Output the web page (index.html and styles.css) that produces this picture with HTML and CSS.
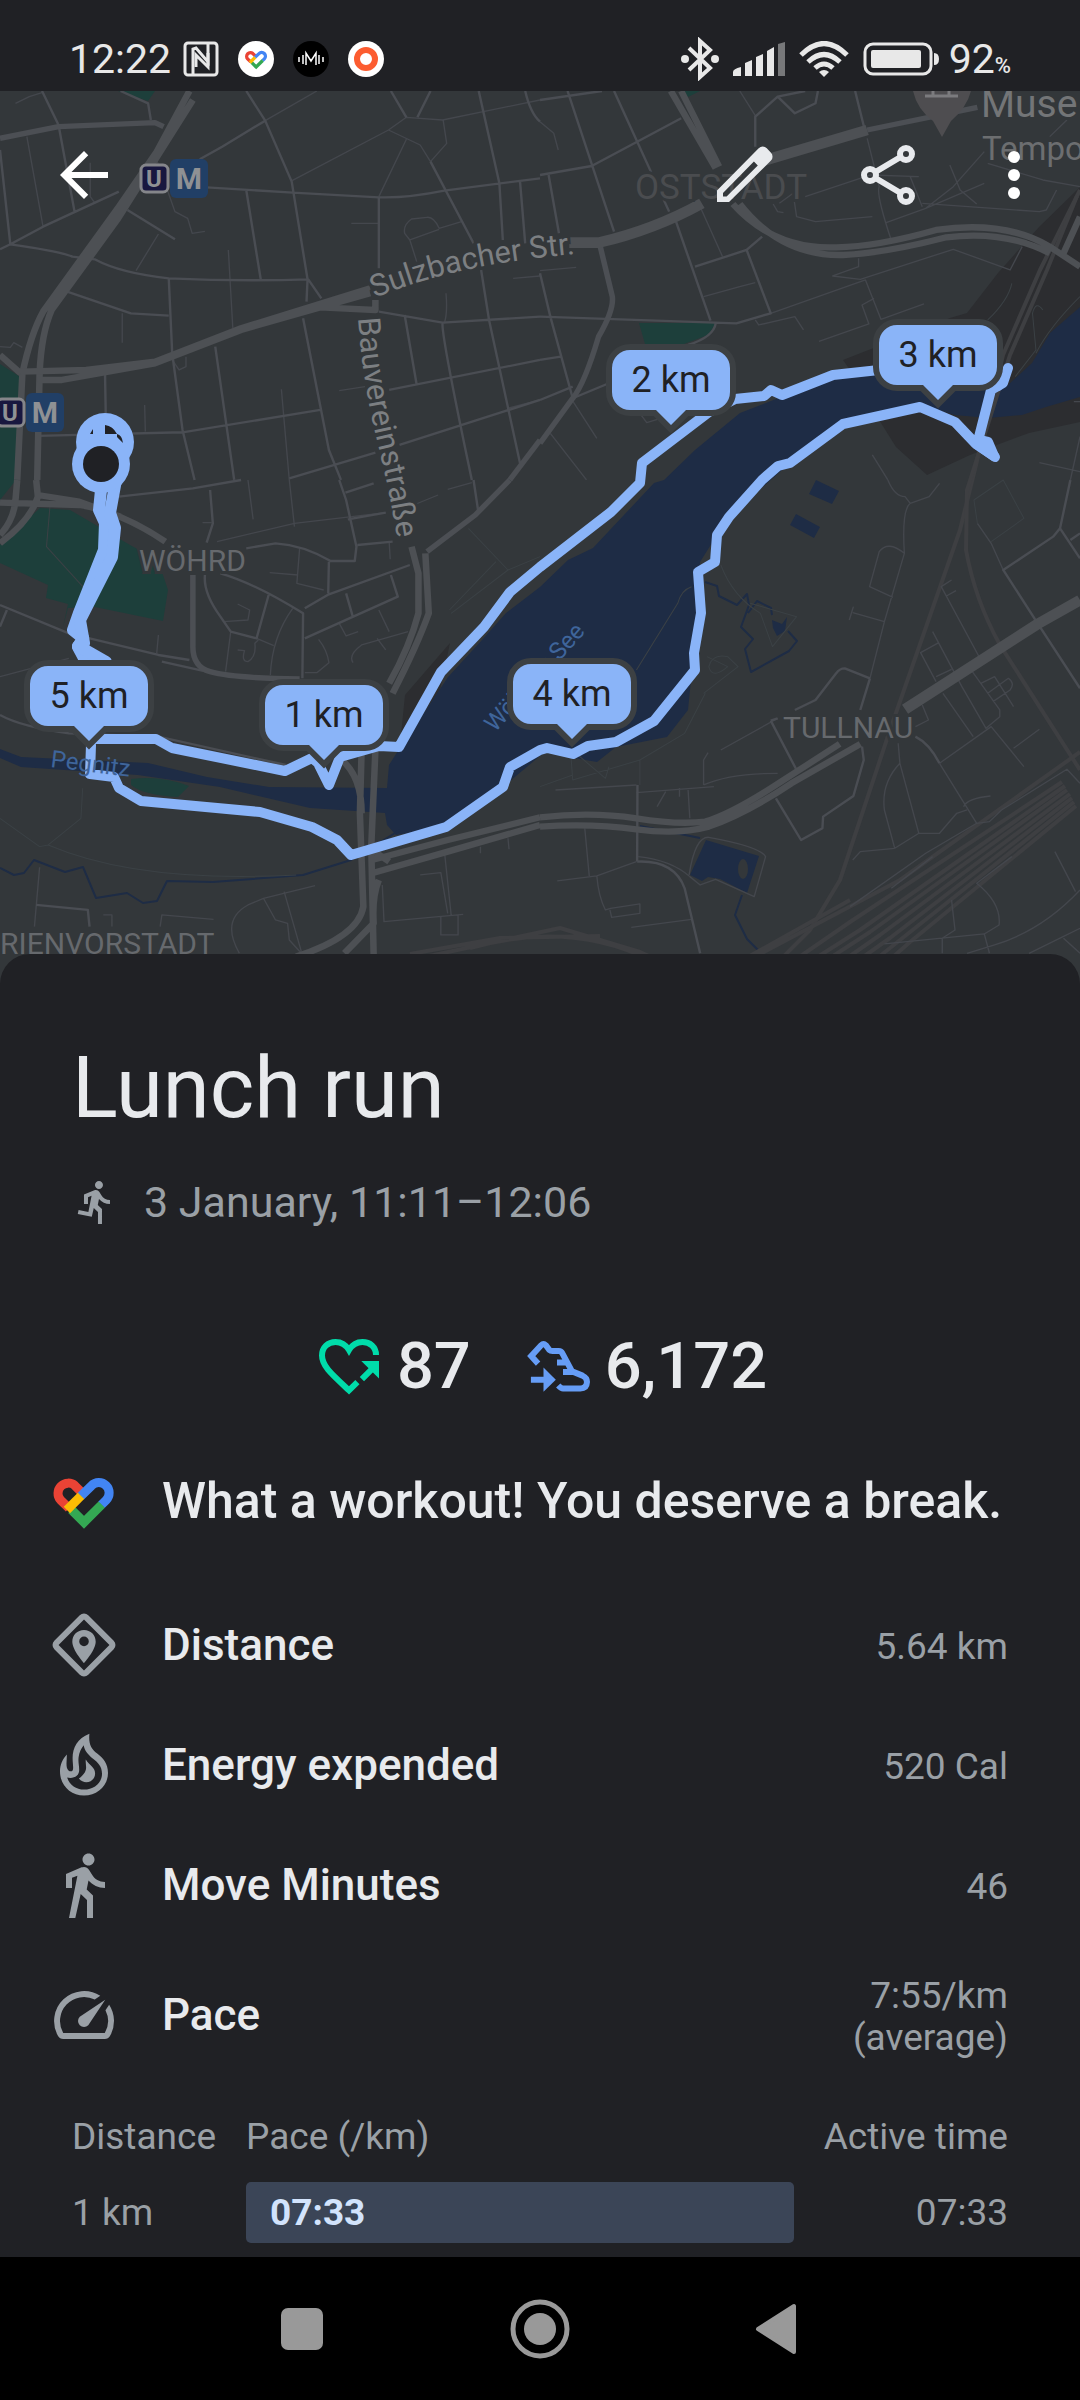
FILE: index.html
```html
<!DOCTYPE html>
<html lang="en">
<head>
  <meta charset="UTF-8">
  <meta name="viewport" content="width=device-width, initial-scale=1.0">
  <title>Lunch run</title>
  <link rel="stylesheet" href="styles.css">
</head>
<body>
  <!-- Status bar -->
  <div class="status-bar">
    <span class="clock">12:22</span>
    <svg class="status-icon" viewBox="0 0 36 36">
      <rect x="2" y="2" width="32" height="32" rx="3" fill="none" stroke="#e8e8e8" stroke-width="3"/>
      <path d="M10 33V8l3-1 12 14V12" fill="none" stroke="#e8e8e8" stroke-width="3"/>
      <path d="M13 26V14l12 12V3" fill="none" stroke="#e8e8e8" stroke-width="3"/>
    </svg>
    <svg class="status-icon" viewBox="0 0 36 36">
      <circle cx="18" cy="18" r="18" fill="#fff"/>
      <g transform="translate(5 5) scale(1.1)" fill="none" stroke-width="3">
        <path d="M7 14.4 4.2 11.7A3.4 3.4 0 0 1 9 6.9l2 2" stroke="#ea4335"/>
        <path d="M10.9 10.4 14.5 6.9a3.4 3.4 0 0 1 4.9 4.8L17.8 13.3" stroke="#4285f4"/>
        <path d="M17.9 13.2 12 19.1 7.8 14.9" stroke="#34a853"/>
        <path d="M6.3 15 11 10.3" stroke="#fbbc04"/>
      </g>
    </svg>
    <svg class="status-icon" viewBox="0 0 36 36">
      <circle cx="18" cy="18" r="18" fill="#000"/>
      <path d="M13 24V12l5 8 5-8v12M6 16v5M10 14v9M26 14v9M30 16v5" fill="none" stroke="#fff" stroke-width="1.5"/>
    </svg>
    <svg class="status-icon" viewBox="0 0 36 36">
      <circle cx="18" cy="18" r="18" fill="#fff"/>
      <circle cx="18" cy="18" r="9" fill="none" stroke="#fc5c30" stroke-width="6"/>
    </svg>
    <div class="status-right">
      <svg width="38" height="44" viewBox="0 0 38 44">
        <path d="M8 11 29 31 19 40V4l10 9L8 33" fill="none" stroke="#e8e8e8" stroke-width="4"/>
        <circle cx="4" cy="22" r="4" fill="#e8e8e8"/>
        <circle cx="34" cy="22" r="4" fill="#e8e8e8"/>
      </svg>
      <svg width="52" height="34" viewBox="0 0 52 34" fill="#e8e8e8">
        <path d="M0 30q0-3 8-5v9H0zM12 21l7-3v16h-7zM23 15l7-3v22h-7zM34 9l7-4v29h-7z"/>
        <path d="M45 2l7-2v34h-7z" fill="#77787a"/>
      </svg>
      <svg width="50" height="36" viewBox="0 0 50 36" fill="none" stroke="#e8e8e8" stroke-width="5">
        <path d="M2 14q23-23 46 0M9 21q16-15 32 0M16 27q9-8 18 0"/>
        <path d="M20 31q5-4 10 0l-5 5z" fill="#e8e8e8" stroke="none"/>
      </svg>
      <svg width="76" height="34" viewBox="0 0 76 34">
        <rect x="2" y="2" width="66" height="30" rx="8" fill="none" stroke="#e8e8e8" stroke-width="3"/>
        <rect x="8" y="8" width="50" height="18" rx="2" fill="#e8e8e8"/>
        <path d="M71 11q5 0 5 6t-5 6z" fill="#e8e8e8"/>
      </svg>
      <span class="battery">92<small>%</small></span>
    </div>
  </div>

  <!-- Route map -->
  <div class="map">
    <svg class="map-canvas" viewBox="0 91 1080 893" role="img" aria-label="Route map">
      <rect class="land" x="0" y="91" width="1080" height="893"/>

      <!-- Dark ground, parks -->
      <path class="ground" d="M1080 187 1039 227 998 273 967 313 950 318 843 360 850 370 881 423 896 447 927 475 970 455 1029 433 1080 422zM450 643 405 695 400 745 440 690z"/>
      <path class="park" d="M0 364 22 378 16 480 0 500zM118 91h37l-7 10zM682 91h18l-12 6zM639 323h77l-8 12-24 9h-39zM0 545 40 508 70 510 130 545 158 560 168 590 163 621 95 607 68 608 63 627 68 604 46 598 48 585 0 563zM131 779q30-4 58 7l-11 11q-35-2-47-12z"/>

      <!-- Water -->
      <path class="water" d="M0 749 21 757 148 763 207 777 269 787 387 788 389 765 403 743 424 713 448 677 482 640 506 613 540 587 568 560 593 548 654 483 664 480 695 450 740 413 781 397 833 378 879 373 998 390 1008 385 1032 363 1050 333 1080 307V397L1046 407 1022 415 988 418 955 415 920 405 843 424 790 463 729 517 717 535 700 562 701 613 694 653 691 680 688 710 667 737 616 747 597 762 574 758 547 750 503 787 446 827 396 835 387 825 385 813 310 808 220 787 138 775 21 767 0 758zM816 480 839 491 832 504 809 494zM796 514 820 527 814 538 790 525zM706 840 759 856 747 893 720 879 708 877 702 881 690 875z"/>
      <ellipse class="land" cx="743" cy="869" rx="5" ry="10"/>
      <path class="water" d="M772 620l10 4 5-7-2 14-8 5-4-8z"/>
      <path class="stream" d="M0 868 14 875 24 873 34 860 65 872 83 867 96 898 127 893 143 903 157 901 167 881 213 882 303 875 351 860 400 830M705 582l12 4 2 10 18 9 10-11 2 11-8 22 12 12-8 10 6 23 38-21 8-10-9-10M772 615l-1-7-14-7-9 12M640 826 700 838M742 895l-7 20 12 24 20 20"/>

      <!-- Railways -->
      <g class="rail">
        <path d="M1080 190 1040 270 1003 355 960 530 890 730 840 880 810 930 760 980"/>
        <path d="M1077 196 1047 270 1010 355 967 490 966 550Q975 600 1000 645L1080 770"/>
        <path d="M730 970 900 880 1080 752M700 984 850 900M760 984 850 922 1062 782M775 984 860 930 1065 786M790 984 870 932 1067 790M810 984 880 935 1070 794M825 984 890 938 1072 798M845 984 900 940 1074 802M862 984 910 942 1076 806"/>
        <path d="M410 954 500 938 600 936M420 958 560 928 640 952 680 970M470 948Q570 920 650 960"/>
      </g>

      <!-- Streets, north west -->
      <g transform="scale(.3444 .3333)">
        <path class="lane" d="M45 310 85 290 122 278M78 410 125 680M262 488V590L275 608M848 542 1128 390 1180 352 1285 360 1568 300M920 273 770 362M1180 418 1100 590M1128 390 1220 435 1250 485 1297 430 1287 362M455 480 508 635 545 655 558 700 595 694M1020 670H1100M1340 665 1275 685Q1260 650 1240 652L1195 657Q1170 675 1175 700L1190 720 1275 688M1190 720 1210 785M460 702 395 812M355 940V1028M663 750 676 985M985 1172 1060 1160M817 1168 840 1440M420 1215 422 1295M1295 880Q1300 940 1290 970M1490 835 1568 828M0 1040 30 1042 40 1028 65 1042M1475 1225 1568 1200M500 1080 520 1110 540 1100V1070"/>
        <path class="street" d="M122 273 170 375 217 638M0 450 30 733M0 748 30 733 125 680 345 575M30 733Q180 755 210 770L275 778Q350 820 490 835 700 845 895 838L933 895M715 273 770 362 847 545 893 838 890 905M770 362 645 440 580 478M600 562 850 578 1100 592Q1180 595 1290 572L1568 535M1135 273 1180 352M1250 273 1212 352M1100 592V805M1250 485 1375 730M1390 273 1450 550 1460 720M1510 545 1525 730M715 570 757 838M490 835 500 1060 530 1290 565 1440M195 875 380 940 490 947M370 630 508 718M625 1040 680 1440M880 955 955 1350 990 1440M305 1125 307 1240M110 1308 530 1297 930 1230M840 1435 1090 1358M1130 1170 1568 1080M1160 1335 1568 1200M1100 935 1285 968 1568 950M1175 945 1210 1155M1285 968Q1280 1000 1370 1440M1397 810 1420 960 1510 1390M350 273 430 310 438 360M1525 273Q1540 340 1568 365"/>
        <path class="road" d="M0 415 170 380 450 368 475 380"/>
        <path class="avenue" d="M550 273 455 455 345 620 125 935Q90 1000 65 1120L50 1440M560 300 340 660 150 930Q120 1000 115 1120L108 1440"/>
        <path class="avenue" d="M60 1115 250 1110 450 1085 700 985 1075 865M110 1140 180 1140 450 1090 700 990 1075 880M930 922 1090 930V900M0 1065 60 1120"/>
        <path class="road" d="M1568 1320 1480 1440"/>
      </g>
      <!-- Streets, north east -->
      <g transform="translate(540 0) scale(.3444 .3333)">
        <path class="lane" d="M0 365 40 400 53 450M580 273 627 350M465 620 530 770M475 890 580 860 625 848M770 590 960 525 1100 530M695 610 735 580 745 650 800 665 965 650M677 612 690 635 707 638M950 415 985 560Q975 580 1018 715M1075 530 1110 620M1190 495 1220 570 1268 612M1005 668 1120 625 1290 550M925 775V800L850 828 930 838 1200 748 1365 810 1400 740M670 940 945 840 990 958 1115 912M970 895 935 915 955 972 810 1024M625 960 635 975 740 950 765 990M0 812 105 802M290 1240 310 1268 350 1255M1110 610 1450 635 1470 630 1500 570M1120 625 1200 560 1290 455M1300 490 1460 540 1568 560M1530 360 1480 410M30 1300 135 1440M90 1195 165 1315M965 1365 1010 1440M1450 1388 1568 1415M1550 1205H1568M1568 1310 1540 1440"/>
        <path class="footpath" d="M1300 960Q1360 900 1370 850M1460 930Q1440 900 1430 940L1440 1050 1380 1130M1568 890Q1480 980 1440 1060"/>
        <path class="street" d="M0 300 180 273M80 273 215 695M0 525 150 498 410 355M215 273 375 635M25 525 55 700M395 665 495 962M450 800 600 750 645 710M600 750 670 940 570 970 0 950M0 820 30 950 95 1195M625 440 625 350 690 290 770 273M690 290 740 340 800 310 807 273M915 273 943 390M0 1080 60 1070M0 1200 95 1160M95 1195 200 1150M510 970Q505 1010 430 1035"/>
        <path class="avenue" d="M380 273 510 505M410 273 520 500"/>
        <path class="avenue wide" d="M640 485 950 390"/>
        <path class="road" d="M950 390 1270 322M175 740 210 890Q215 930 170 1010 130 1150 95 1195L0 1330"/>
        <path class="avenue wide" d="M85 728H170Q330 690 470 610"/>
        <path class="avenue" d="M560 612Q680 750 860 742 980 740 1150 690 1350 660 1480 740L1568 800M580 612Q700 770 880 765 1000 760 1180 712 1350 690 1480 760M1520 760 1568 650"/>
      </g>
      <!-- Streets, south west -->
      <g transform="translate(0 480) scale(.3444 .3333)">
        <path class="lane" d="M720 0 735 118M840 0 855 140M588 128H615M630 185 855 130 1120 98M783 278 865 285M870 205 862 310 940 330M1208 72 1272 45M1300 28 1370 8M1130 185 1133 238M690 372 725 390 720 420 650 425M670 455 655 575M745 475 795 497M690 510 710 512Q700 545 720 545 745 530 740 490L750 480M850 385Q790 470 785 585M985 430 1005 468 1040 455M1100 390 1130 455M1025 548Q1010 525 1050 495L1185 455M1095 475 1120 510M885 578H920L955 548Q950 510 925 478M460 465 455 520M0 590 200 535M300 1305H325V1340M115 1162 100 1340M465 1340 470 1305 620 1318M695 1420Q640 1320 720 1275L765 1255 915 1217M765 1255 800 1320 835 1330 840 1380 875 1420M825 1235 875 1415M1110 1215 1115 1325 1345 1303M1290 1110 1310 1305M1280 1310V1365H1330V1305M1220 1185 1280 1178 1300 1300M1475 1075 1478 1108M1395 1100V1120"/>
        <path class="footpath" d="M145 80 135 200 245 325M1360 145 1475 270 1568 230M1475 270 1310 400M1440 245 1305 390M240 925 235 1015 140 1095 115 1100 0 1015M140 1095Q400 1210 860 1185"/>
        <path class="street" d="M345 50 560 25 700 0M610 30 618 130 600 188M985 0 1005 60 1035 200 1030 243 960 243Q880 195 800 190L715 205M1003 38 1085 10M1010 118 1120 98M1038 195 1140 185M955 245 953 340M595 285Q590 340 640 410L670 455 745 475 780 345M640 280Q740 310 880 400L878 595M885 385 955 343 1190 255M885 475 1155 350 1135 285M1005 340 1025 412M0 375 200 460 460 525 550 540M470 545 600 575M0 705Q60 740 200 760L460 770 830 855M20 390 0 440M105 1275 255 1290 260 1340M1375 0 1388 90"/>
        <path class="road" d="M560 285V500Q560 560 610 575 680 595 870 597M1480 0 1380 105 1240 215"/>
        <path class="avenue" d="M50 0 45 60Q40 120 0 165M105 0 110 50Q90 120 0 190M0 68 230 75Q350 95 480 185M110 45 230 65 350 110"/>
        <path class="avenue" d="M1195 200 1215 280 1215 400Q1190 500 1130 610M1235 220 1245 400Q1210 500 1140 640M1050 810 1045 1000 1055 1280Q1040 1370 860 1430M1090 810 1078 1100 1085 1430M980 830Q1050 880 1050 1000M1080 1140 1300 1080 1568 1012M1080 1180 1300 1115 1568 1035M1100 1200Q1080 1250 1085 1330L1000 1420M1080 1110 1130 1145"/>
      </g>
      <!-- Streets, south east -->
      <g transform="translate(540 480) scale(.3444 .3333)">
        <path class="lane" d="M1010 0Q1030 50 1060 50L1075 70 1130 50 1160 10M1075 70Q1050 90 1058 220L1000 425 958 595M1058 220Q1010 180 985 215L957 320 1025 352M1000 425 908 398M910 380 898 420M1270 130 1310 190 1345 270M1195 300 1165 320 1280 540M1180 348 1208 332M1140 455 1225 620 1295 745 1335 710 1335 690 1245 560M1158 488 1105 518 1150 605M1150 590 1195 568M1280 610 1320 590 1375 680M1300 640 1360 595Q1380 610 1365 630L1315 665M1170 640 1258 770M1160 850 1310 740 1405 860M1375 805 1450 748M1160 850 1268 1030 1120 1120 900 1280M1268 1030 1305 1025 1340 990 1530 868 1568 910M1090 740 1128 720 1110 675M1040 790 1045 850 1100 1060 1030 1105M1045 850Q990 910 1000 990L1030 1105M1030 1105 930 1115 908 1140M1100 1060H1160L1210 1000 1240 990M1230 980Q1240 955 1308 948M1020 1225 1140 1130M525 810 690 715M475 915V840L488 818M475 915Q550 880 690 880M45 930 280 915M280 938 505 920M340 980 365 935M405 925V950M430 930 435 1015M130 1045 143 1188M50 1203 165 1188 280 1145M165 1188Q170 1250 190 1290L205 1285 290 1272V1300L208 1312 203 1290M265 1342 440 1318M285 1130Q380 1140 435 1190L465 1215 510 1198 622 1250 655 1130Q640 1100 490 1072 450 1070 433 1185M1370 1130 1268 1210Q1340 1270 1333 1335L1290 1362 1000 1392M1195 1260 1205 1350 1168 1375V1420M1495 1115 1555 1235M1568 1230Q1460 1350 1320 1395L1240 1420M1290 1362 1305 1420M1568 1345 1420 1420M1520 1375 1568 1420"/>
        <path class="footpath" d="M1270 130 1260 60 1345 0 1405 115 1310 185M485 530 545 560Q500 600 490 560 500 520 545 530L575 560 475 640M525 255Q560 350 640 400L675 500 745 410 610 370M440 320Q410 330 400 370L280 570M480 640 420 760 290 840 95 900 90 830M290 840V915M110 825 190 895 200 860M0 920 95 885"/>
        <path class="street" d="M1540 0 1510 145 1490 170 1345 270 1445 430 1568 625M1510 145 1568 235M1540 180 1568 160M958 595 930 690M958 595 885 565Q870 565 860 580L800 660 740 690M670 722 745 870M690 715 670 722M685 955 758 1080 820 1045 822 1010 910 948 940 840 935 800M283 915 282 1145M282 1145Q390 1140 420 1225L465 1420M1090 770Q1130 790 1160 850"/>
        <path class="avenue wide" d="M1568 360 1445 432 1060 688"/>
        <path class="avenue" d="M0 1012Q150 995 280 1015 400 1035 480 1025 560 1000 700 905L870 792M0 1040Q150 1030 280 1048 400 1065 490 1040 600 1000 730 910L930 792"/>
      </g>

      <!-- Place names -->
      <path id="sulzbacher" fill="none" d="M375 298Q460 262 590 253"/>
      <path id="bauverein" fill="none" d="M358 318Q362 380 378 445T400 560"/>
      <g class="place">
        <text class="street-name"><textPath href="#sulzbacher">Sulzbacher Str.</textPath></text>
        <text class="street-name"><textPath href="#bauverein">Bauvereinstraße</textPath></text>
        <text x="139" y="571">WÖHRD</text>
        <text x="783" y="738">TULLNAU</text>
        <text x="0" y="954">RIENVORSTADT</text>
        <text class="district" x="635" y="199">OSTSTADT</text>
        <text class="museum" x="981" y="117">Muse</text>
        <text class="temporary" x="982" y="160">Tempo</text>
      </g>
      <path d="M913 91q4 18 20 30l9 16 9-16q16-14 20-30z" fill="#4e4d50"/>
      <path d="M925 96h33M933 91v4M949 91v4" stroke="#7b7b7e" stroke-width="3"/>

      <!-- Stations -->
      <g class="station">
        <rect x="141" y="165" width="27" height="27" rx="5" fill="#18173f" stroke="#85868a" stroke-width="3"/>
        <rect x="170" y="159" width="38" height="39" rx="6" fill="#213f66"/>
        <text x="154" y="187">U</text>
        <text class="metro" x="189" y="189">M</text>
        <rect x="-3" y="399" width="27" height="27" rx="5" fill="#18173f" stroke="#85868a" stroke-width="3"/>
        <rect x="26" y="393" width="38" height="39" rx="6" fill="#213f66"/>
        <text x="10" y="421">U</text>
        <text class="metro" x="45" y="423">M</text>
      </g>

      <!-- Run track -->
      <g class="track">
        <path class="shared" d="M101 490 99 510 105 523 104 550 79 613 73 630 83 638 78 647 86 662"/>
        <path class="shared" d="M116 480 110 513 115 528 112 557 80 620 84 643 78 646 106 662"/>
        <path d="M90 739H156L172 748 285 771 312 758 318 763 329 785 340 757 379 746 399 747 441 672 484 627 510 592 540 567 611 512 640 483 642 463 709 412 735 399 764 396 771 390 782 395 833 375 879 370 960 366 998 386 1003 383 1008 368"/>
        <path d="M998 386 991 390 979 437 995 457 975 443 955 422 920 407 843 424 790 463 778 466 762 480 729 517 717 535 715 562 698 572 701 613 694 653 695 670 654 721 616 742 588 746 573 754 547 748 540 750 510 767 503 787 446 827 351 855 337 840 312 827 260 812 141 801 119 788 114 777 90 774 91 745"/>
        <path class="filled" d="M979 440 988 442 994 456 976 444z"/>
        <circle class="dot" cx="105" cy="442" r="29"/>
        <path d="M90 434l3-5v5zM105 425q8 1 12 9h-12zM117 434q5 1 6 9l-6-6z" fill="#202125" stroke="none"/>
        <circle class="dot" cx="101" cy="464" r="29"/>
        <circle cx="101" cy="464" r="18" fill="#202125" stroke="none"/>
      </g>

      <text class="water-name" transform="translate(50 767) rotate(7)">Pegnitz</text>
      <text class="water-name" transform="translate(495 733) rotate(-48)">Wöhrder See</text>

      <!-- Kilometre markers -->
      <defs>
        <path id="marker" d="M-41-75h82a18 18 0 0 1 18 18v24a18 18 0 0 1-18 18h-26L0 0-15-15h-26a18 18 0 0 1-18-18v-24a18 18 0 0 1 18-18z"/>
      </defs>
      <g class="marker" transform="translate(89 741)"><use href="#marker"/><text y="-33">5 km</text></g>
      <g class="marker" transform="translate(324 760)"><use href="#marker"/><text y="-33">1 km</text></g>
      <g class="marker" transform="translate(671 425)"><use href="#marker"/><text y="-33">2 km</text></g>
      <g class="marker" transform="translate(938 400)"><use href="#marker"/><text y="-33">3 km</text></g>
      <g class="marker" transform="translate(572 739)"><use href="#marker"/><text y="-33">4 km</text></g>
    </svg>

    <div class="toolbar">
      <button class="back" aria-label="Back">
        <svg class="icon" viewBox="0 0 24 24"><path d="M20 11H7.83l5.59-5.59L12 4l-8 8 8 8 1.41-1.41L7.83 13H20z"/></svg>
      </button>
      <button class="action" aria-label="Edit">
        <svg class="icon" viewBox="0 0 24 24"><path fill-rule="evenodd" d="M3 17.2 15.9 4.1l1-1a1.9 1.9 0 0 1 2.7 0l1.4 1.5a1.9 1.9 0 0 1 0 2.6l-1 1L7 21H3zM5 18v1.2h1.2L16.6 8.8l-1.3-1.3z"/></svg>
      </button>
      <button class="action" aria-label="Share">
        <svg class="icon" viewBox="0 0 24 24"><g fill="none" stroke="#e8eaed" stroke-width="2"><circle cx="18" cy="5" r="2"/><circle cx="6" cy="12" r="2"/><circle cx="18" cy="19" r="2"/><path d="M7.8 11 16.2 6M7.8 13l8.4 5"/></g></svg>
      </button>
      <button class="more" aria-label="More options">
        <svg class="icon" viewBox="0 0 24 24"><circle cx="12" cy="6" r="2"/><circle cx="12" cy="12" r="2"/><circle cx="12" cy="18" r="2"/></svg>
      </button>
    </div>
  </div>

  <!-- Activity details -->
  <main class="sheet">
    <h1>Lunch run</h1>
    <p class="date">
      <svg viewBox="0 0 24 24"><path d="M13.49 5.48c1.1 0 2-.9 2-2s-.9-2-2-2-2 .9-2 2 .9 2 2 2zm-3.6 13.9l1-4.4 2.1 2v6h2v-7.5l-2.1-2 .6-3c1.3 1.5 3.3 2.5 5.5 2.5v-2c-1.9 0-3.5-1-4.3-2.4l-1-1.6c-.4-.6-1-1-1.7-1-.3 0-.5.1-.8.1l-5.2 2.2v4.7h2v-3.4l1.8-.7-1.6 8.1-4.9-1-.4 2 7 1.4z"/></svg>
      3 January, 11:11–12:06
    </p>

    <div class="stats">
      <div class="stat">
        <svg class="icon" viewBox="0 0 24 24">
          <path d="M21 8.3C21 5.6 19 4 16.5 4 14.6 4 13 5 12 6.7 11 5 9.4 4 7.5 4 5 4 3 5.8 3 8.5c0 3.5 3.2 6.2 9 11.6l2.8-2.7M16.3 16.4l4-4" fill="none" stroke="#00dcaa" stroke-width="2"/>
          <path d="M16.1 10.3H22v5.9z" fill="#00dcaa"/>
        </svg>
        <span>87</span>
      </div>
      <div class="stat">
        <svg class="icon" viewBox="0 0 24 24">
          <path d="M5.7 11.2 3.4 8.7 6.7 5.1Q7.5 4.3 8.3 5.1L9.4 6.6Q9.8 7 10.5 7H12.6Q13.4 7 13.8 7.8L17 13.8 20.5 15.2Q22 15.9 22 17.3 21.9 19.5 19.8 19.5H14Q13.4 19.5 12.4 18.5M12 10.8h3.6M14 14h3.2M3.3 16.6H8" fill="none" stroke="#669df6" stroke-width="2"/>
          <path d="M7.5 12.5 11.6 16.6 7.5 20.6z" fill="#669df6"/>
        </svg>
        <span>6,172</span>
      </div>
    </div>

    <div class="row message">
      <svg class="icon" viewBox="0 0 24 24" fill="none" stroke-width="3">
        <path d="M7 14.4 4.2 11.7A3.4 3.4 0 0 1 9 6.9l2 2" stroke="#ea4335"/>
        <path d="M10.9 10.4 14.5 6.9a3.4 3.4 0 0 1 4.9 4.8L17.8 13.3" stroke="#4285f4"/>
        <path d="M17.9 13.2 12 19.1 7.8 14.9" stroke="#34a853"/>
        <path d="M6.3 15 11 10.3" stroke="#fbbc04"/>
      </svg>
      <h2>What a workout! You deserve a break.</h2>
    </div>

    <div class="row">
      <svg class="icon" viewBox="0 0 24 24">
        <rect x="5" y="5" width="14" height="14" rx="1" transform="rotate(45 12 12)" fill="none" stroke="#9aa0a6" stroke-width="2"/>
        <path fill-rule="evenodd" d="M12 7c-2.2 0-3.9 1.7-3.9 3.9 0 2.8 3.9 7.1 3.9 7.1s3.9-4.3 3.9-7.1C15.9 8.7 14.2 7 12 7zm0 2.2a1.6 1.6 0 1 1 0 3.2 1.6 1.6 0 0 1 0-3.2z"/>
      </svg>
      <h3>Distance</h3>
      <span class="value">5.64 km</span>
    </div>
    <div class="row">
      <svg class="icon" viewBox="0 0 24 24">
        <path fill-rule="evenodd" d="M13.8 1.6C9.8 3.2 8.2 6.2 8.2 9.7c0 1.8.4 3.6 0 4.1-.5.7-1.6.2-1.9-.9-.3-1.3 0-3 0-4.4C4.9 9.9 4 11.9 4 14.2c0 4.5 3.5 8 8 8s8-3.4 8-7.5c0-3.3-1.7-5-3.6-6.5-2.2-1.8-2.9-3.4-2.6-6.6zM11.9 5.4c.3 1.8 1.3 3 3 4.4 1.8 1.4 3.1 2.6 3.1 5.1 0 3.1-2.7 5.3-6 5.3-2.6 0-4.9-1.6-5.6-4 2.3.4 4-.5 4-2.5 0-1.8-.4-2.5-.2-4.3.2-1.6.9-3 1.7-4z"/>
        <path d="M12.6 10.2c-.3 2 1.3 3.6-2.3 6.3 1.9 2.4 5.4 1.1 5.4-1.7 0-2-1.8-2.5-3.1-4.6z"/>
      </svg>
      <h3>Energy expended</h3>
      <span class="value">520 Cal</span>
    </div>
    <div class="row">
      <svg class="icon" viewBox="0 0 24 24"><path d="M13.5 5.5c1.1 0 2-.9 2-2s-.9-2-2-2-2 .9-2 2 .9 2 2 2zM9.8 8.9L7 23h2.1l1.8-8 2.1 2v6h2v-7.5l-2.1-2 .6-3C14.8 12 16.8 13 19 13v-2c-1.9 0-3.5-1-4.3-2.4l-1-1.6c-.4-.6-1-1-1.7-1-.3 0-.5.1-.8.1L6 8.3V13h2V9.6l1.8-.7"/></svg>
      <h3>Move Minutes</h3>
      <span class="value">46</span>
    </div>
    <div class="row pace">
      <svg class="icon" viewBox="0 0 24 24">
        <path d="M20.38 8.57l-1.23 1.85a8 8 0 0 1-.22 7.58H5.07A8 8 0 0 1 15.58 6.85l1.85-1.23A10 10 0 0 0 3.35 19a2 2 0 0 0 1.72 1h13.85a2 2 0 0 0 1.74-1 10 10 0 0 0-.27-10.44z"/>
        <path d="M10.59 15.41a2 2 0 0 0 2.83 0l5.66-8.49-8.49 5.66a2 2 0 0 0 0 2.83z"/>
      </svg>
      <h3>Pace</h3>
      <span class="value">7:55/km<br>(average)</span>
    </div>

    <table class="splits">
      <thead>
        <tr><th class="km">Distance</th><th>Pace (/km)</th><th class="time">Active time</th></tr>
      </thead>
      <tbody>
        <tr><td>1 km</td><td><div class="bar" style="width: 100%">07:33</div></td><td class="time">07:33</td></tr>
      </tbody>
    </table>
  </main>

  <!-- System navigation -->
  <nav class="nav-bar">
    <button aria-label="Recent apps"><svg viewBox="0 0 60 60"><rect x="9" y="9" width="42" height="42" rx="7"/></svg></button>
    <button aria-label="Home"><svg viewBox="0 0 60 60"><circle cx="30" cy="30" r="16"/><circle cx="30" cy="30" r="27" fill="none" stroke="#999" stroke-width="5"/></svg></button>
    <button aria-label="Back"><svg viewBox="0 0 60 60"><path d="M10 30 46 7v46z" stroke="#999" stroke-width="4" stroke-linejoin="round"/></svg></button>
  </nav>
</body>
</html>
```
FILE: styles.css
```css
* {
  margin: 0;
  padding: 0;
  box-sizing: border-box;
}

body {
  font-family: Roboto, "Liberation Sans", sans-serif;
  background-color: #000;
  color: #e8eaed;
}

button {
  background: none;
  border: none;
  cursor: pointer;
}

svg {
  display: block;
}

.icon {
  width: 72px;
  height: 72px;
  flex: none;
}

/* Status bar */
.status-bar {
  display: flex;
  align-items: center;
  height: 91px;
  padding: 28px 69px 2px;
  background-color: #202125;
  color: #e8e8e8;
}

.clock {
  font-size: 41px;
  margin-right: 12px;
}

.status-icon {
  width: 36px;
  height: 36px;
  margin-right: 19px;
}

.status-right {
  display: flex;
  align-items: center;
  gap: 14px;
  margin-left: auto;
}

.status-right svg:last-of-type {
  margin-right: -4px;
}

.battery {
  font-size: 41px;
}

.battery small {
  font-size: 22px;
  font-weight: 500;
}

/* Map */
.map {
  position: relative;
}

.map-canvas {
  width: 100%;
  height: auto;
}

.land { fill: #33373a; }
.ground { fill: #2c2d30; }
.park { fill: #1d3f3b; }
.water { fill: #1e2c45; }

.stream,
.rail,
.footpath,
.lane,
.street,
.road,
.avenue {
  fill: none;
  stroke-linejoin: round;
}

.stream { stroke: #1e2c45; stroke-width: 2; }
.rail { stroke: #3e3f42; stroke-width: 4; }
.footpath { stroke: #3b4145; stroke-width: 3; }
.lane { stroke: #44474d; stroke-width: 4; }
.street { stroke: #4a4d53; stroke-width: 7; }
.road { stroke: #4c4f54; stroke-width: 16; }
.avenue { stroke: #4d5054; stroke-width: 19; }
.avenue.wide { stroke-width: 32; }

.place text {
  font-size: 30px;
  fill: #66696d;
  stroke: #33373a;
  stroke-width: 6px;
  paint-order: stroke;
}

.place .street-name { font-size: 31px; fill: #7c7f82; }
.place .district { font-size: 35px; fill: #4a4c4f; }
.place .museum { font-size: 39px; fill: #737577; }
.place .temporary { font-size: 33px; fill: #6c6e70; }

.station text {
  font-size: 24px;
  font-weight: 700;
  fill: #8f9194;
  text-anchor: middle;
}

.station .metro { font-size: 30px; }

.water-name {
  font-size: 24px;
  fill: #3f659b;
}

.track {
  fill: none;
  stroke: #8ab4f8;
  stroke-width: 10;
  stroke-linejoin: round;
  stroke-linecap: round;
}

.track .shared {
  stroke-width: 12;
}

.track .filled {
  fill: #8ab4f8;
}

.track .dot {
  fill: #8ab4f8;
  stroke: none;
}

.marker use {
  fill: #8ab4f8;
  stroke: #3c4043;
  stroke-width: 12px;
  paint-order: stroke;
}

.marker text {
  font-size: 36px;
  fill: #202125;
  text-anchor: middle;
}

/* Buttons over the map */
.toolbar {
  position: absolute;
  top: 0;
  left: 0;
  right: 0;
  display: flex;
  align-items: center;
  height: 168px;
  padding: 0 12px 0 48px;
  fill: #e8eaed;
}

.toolbar button {
  display: flex;
  justify-content: center;
}

.toolbar .back {
  margin-right: auto;
  fill: #fff;
}

.toolbar .action {
  width: 144px;
}

.toolbar .more {
  width: 108px;
  fill: #fff;
}

/* Details sheet */
.sheet {
  position: relative;
  margin-top: -30px;
  padding: 86px 72px 14px;
  background-color: #202125;
  border-radius: 30px 30px 0 0;
}

h1 {
  font-size: 85px;
  line-height: 96px;
  font-weight: 400;
}

.date {
  display: flex;
  align-items: center;
  gap: 24px;
  height: 60px;
  margin-top: 36px;
  font-size: 43px;
  color: #9aa0a6;
  fill: #9aa0a6;
}

.date svg {
  width: 48px;
  height: 48px;
}

.stats {
  display: flex;
  justify-content: center;
  gap: 50px;
  margin-top: 92px;
}

.stat {
  display: flex;
  align-items: center;
  gap: 12px;
  height: 84px;
  font-size: 65px;
  font-weight: 500;
}

.row {
  display: flex;
  align-items: center;
  height: 120px;
  margin-left: -24px;
  fill: #9aa0a6;
}

.row h2,
.row h3 {
  margin-left: 42px;
  font-weight: 500;
  white-space: nowrap;
}

.row h2 { font-size: 50px; }
.row h3 { font-size: 44px; }

.message {
  margin: 33px -24px 24px;
}

.pace {
  height: 140px;
}

.value {
  margin-left: auto;
  padding-top: 4px;
  font-size: 37px;
  line-height: 42px;
  text-align: right;
  color: #9aa0a6;
}

/* Kilometre splits */
.splits {
  width: 100%;
  margin-top: 21px;
  border-collapse: collapse;
  table-layout: fixed;
  font-size: 37px;
  color: #9aa0a6;
}

.splits th {
  height: 60px;
  font-weight: 400;
  text-align: left;
  white-space: nowrap;
}

.splits td {
  padding-top: 16px;
}

.splits .km {
  width: 174px;
}

.splits .time {
  width: 214px;
  text-align: right;
}

.bar {
  height: 61px;
  padding-left: 24px;
  line-height: 61px;
  font-weight: 700;
  color: #d2e3fc;
  background-color: #3b4557;
  border-radius: 5px;
}

/* System navigation */
.nav-bar {
  display: flex;
  justify-content: center;
  align-items: center;
  height: 143px;
}

.nav-bar button {
  width: 238px;
}

.nav-bar svg {
  width: 60px;
  height: 60px;
  margin: 0 auto;
  fill: #999;
}
```
